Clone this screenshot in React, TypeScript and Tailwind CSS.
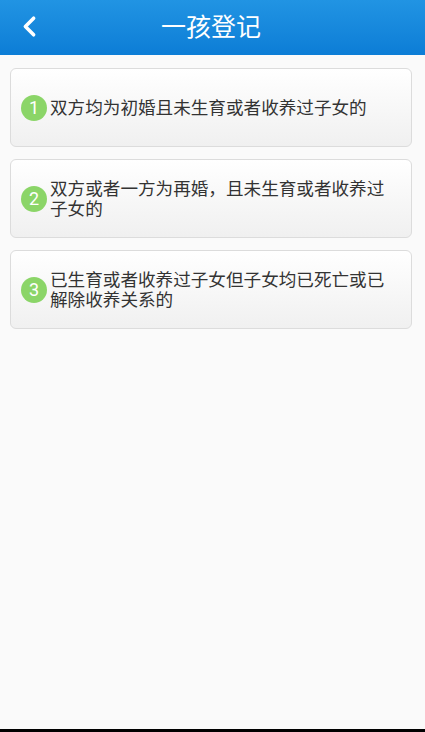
import { ChevronLeft } from "lucide-react";

const ITEMS = [
  "双方均为初婚且未生育或者收养过子女的",
  "双方或者一方为再婚，且未生育或者收养过子女的",
  "已生育或者收养过子女但子女均已死亡或已解除收养关系的",
];

const FONT = "font-['Roboto','Noto_Sans_CJK_SC',sans-serif]";

export default function App() {
  return (
    <div className={`flex h-screen flex-col bg-[#fafafa] ${FONT}`}>
      <header className="relative flex h-[55px] shrink-0 items-center justify-center bg-gradient-to-b from-[#2194e3] to-[#0c7dd6]">
        <button type="button" className="absolute left-[13px] top-[10px] text-white">
          <ChevronLeft size={33} strokeWidth={2.6} />
        </button>
        <h1 className="pr-[3px] text-[25px] leading-none text-white">一孩登记</h1>
      </header>

      <main className="flex flex-1 flex-col gap-3 pl-[10px] pr-[13px] pt-[13px]">
        {ITEMS.map((text, i) => (
          <div
            key={i}
            className="flex h-[79px] items-center rounded-[6px] border border-[#dcdcdc] bg-gradient-to-b from-white to-[#f0f0f0] pl-[10px] pr-[14px]"
          >
            <span className="flex h-[26px] w-[26px] shrink-0 items-center justify-center rounded-full bg-[#8bd568] text-[18px] leading-none text-white">
              {i + 1}
            </span>
            <p className="ml-[3px] text-[17.6px] leading-[20px] text-[#333]">{text}</p>
          </div>
        ))}
      </main>

      <div className="h-[3px] shrink-0 bg-black" />
    </div>
  );
}
